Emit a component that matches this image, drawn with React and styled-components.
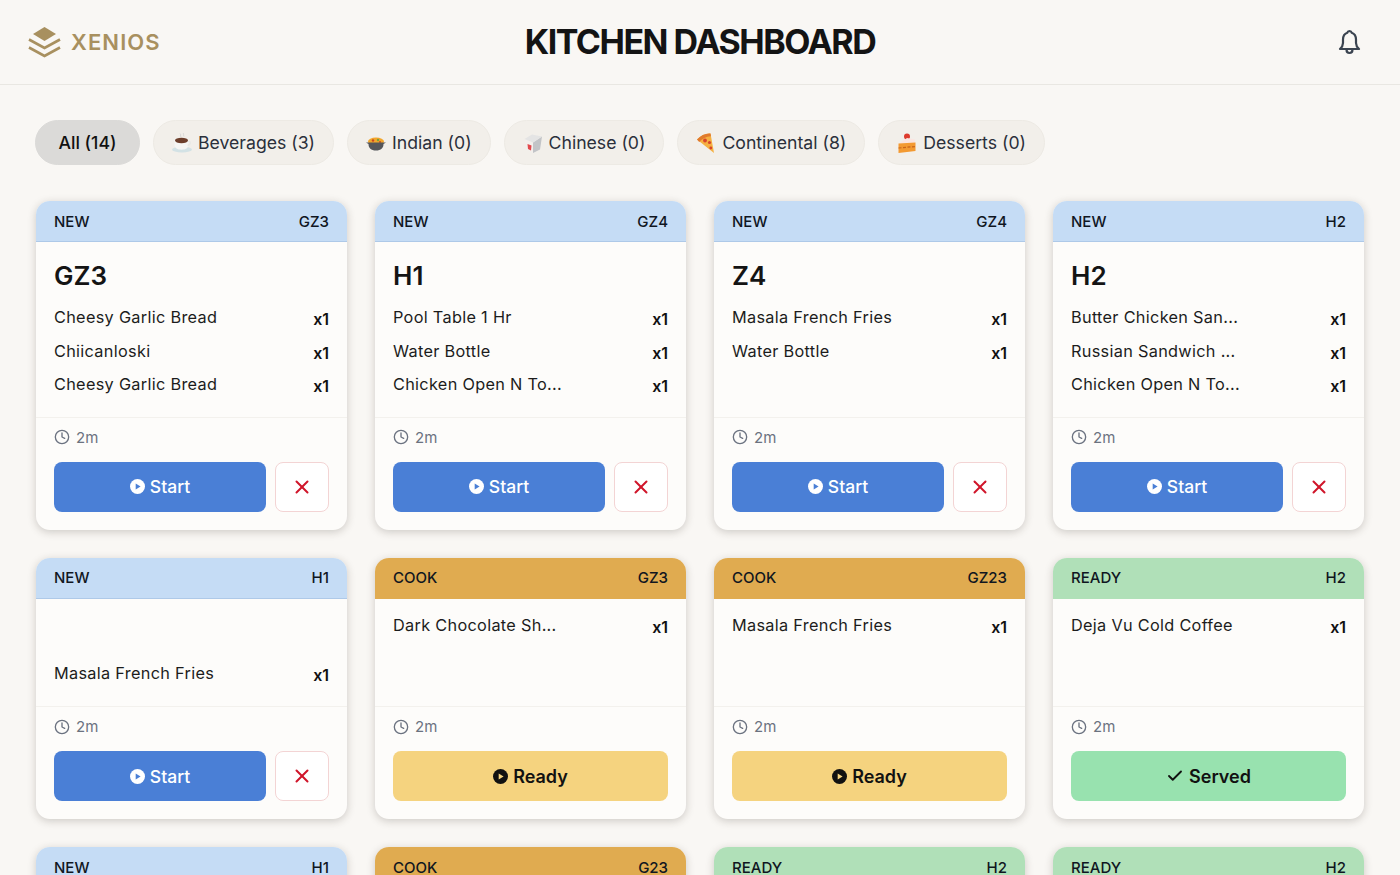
import React from "react";
import styled, { createGlobalStyle } from "styled-components";
import { Clock, X, Check } from "lucide-react";

const Global = createGlobalStyle`
  html, body { margin: 0; padding: 0; background: #f9f7f4; overflow: hidden; }
  * { box-sizing: border-box; }
  body { font-family: Inter, "Noto Sans", sans-serif; color: #111; }
`;

const Page = styled.div`
  height: 875px;
  overflow: hidden;
`;
const Header = styled.header`
  height: 85px;
  display: grid;
  grid-template-columns: 1fr auto 1fr;
  align-items: center;
  padding: 0 38px;
  border-bottom: 1px solid #e9e7e2;
`;
const Brand = styled.div`
  display: flex;
  align-items: center;
  gap: 10px;
  margin: -1px 0 0 -10px;
  color: #a8905f;
  font-size: 22px;
  font-weight: 600;
  letter-spacing: 1.1px;
`;
const Title = styled.h1`
  margin: -2px 0 0;
  font-size: 34px;
  font-weight: 700;
  letter-spacing: -1.5px;
  color: #141414;
`;
const BellWrap = styled.div`
  justify-self: end;
  display: flex;
  color: #3b4450;
`;
const Filters = styled.nav`
  display: flex;
  gap: 13px;
  padding: 35px 35px 0;
`;
const Chip = styled.button`
  height: 45px;
  display: flex;
  align-items: center;
  gap: 6px;
  padding: 0 ${p => (p.$active ? "22.5px" : "18px")};
  border-radius: 23px;
  border: 1px solid ${p => (p.$active ? "#dbdad8" : "#edeae4")};
  background: ${p => (p.$active ? "#dbdad8" : "#f2efea")};
  color: ${p => (p.$active ? "#111" : "#2b303b")};
  font: ${p => (p.$active ? 500 : 400)} 17.65px Inter, sans-serif;
`;
const Grid = styled.main`
  display: grid;
  grid-template-columns: repeat(4, 311px);
  gap: 28px;
  padding: 36px 36px 0;
`;
const Card = styled.article`
  display: flex;
  flex-direction: column;
  background: #fdfcfa;
  border-radius: 14px;
  overflow: hidden;
  box-shadow: 0 2px 8px rgba(50, 40, 30, 0.22);
`;
const tones = {
  NEW: { head: "#c5dcf5", line: "#aec9e8" },
  COOK: { head: "#e0ab50", line: "#e0ab50" },
  READY: { head: "#b0e0b8", line: "#b0e0b8" },
};
const CardHead = styled.div`
  height: 41px;
  flex: none;
  display: flex;
  justify-content: space-between;
  align-items: center;
  padding: 0 18px;
  font-size: 15px;
  font-weight: 500;
  color: #10161f;
  background: ${p => tones[p.$status].head};
  border-bottom: 1px solid ${p => tones[p.$status].line};
`;
const Body = styled.div`
  flex: 1;
  padding: 18px 18px 24px;
`;
const Heading = styled.h2`
  margin: 0 0 16px;
  height: 32px;
  line-height: 32.5px;
  font-size: 26px;
  font-weight: 600;
  color: #141414;
`;
const Items = styled.ul`
  list-style: none;
  margin: 0;
  padding: 0;
  display: flex;
  flex-direction: column;
  gap: 16px;
`;
const Item = styled.li`
  height: 17.5px;
  line-height: ${p => (p.$plain ? "17.5px" : "18.5px")};
  display: flex;
  justify-content: space-between;
  font-size: 16.3px;
  letter-spacing: 0.3px;
  color: #1c1c1c;
`;
const Qty = styled.span`
  position: relative;
  top: 2px;
  font-size: 16px;
  font-weight: 600;
  color: #111;
  letter-spacing: 0;
`;
const Footer = styled.div`
  border-top: 1px solid #f3f1ed;
  padding: 11px 18px 18px;
`;
const Time = styled.div`
  height: 17px;
  display: flex;
  align-items: center;
  gap: 6px;
  margin-bottom: 16px;
  font-size: 15px;
  color: #6b7280;
`;
const Actions = styled.div`
  display: flex;
  gap: 9px;
`;
const actionTones = {
  Start: { bg: "#4a7fd6", fg: "#fff", weight: 500, size: "17.5px" },
  Ready: { bg: "#f5d37f", fg: "#111", weight: 600, size: "18px" },
  Served: { bg: "#98e2af", fg: "#111", weight: 600, size: "18px" },
};
const Action = styled.button`
  flex: 1;
  height: 50px;
  border: 0;
  border-radius: 8px;
  display: flex;
  align-items: center;
  justify-content: center;
  gap: 5px;
  font: ${p => actionTones[p.$kind].weight} ${p => actionTones[p.$kind].size} Inter, sans-serif;
  background: ${p => actionTones[p.$kind].bg};
  color: ${p => actionTones[p.$kind].fg};
`;
const Cancel = styled.button`
  width: 54px;
  height: 50px;
  flex: none;
  border: 1px solid #f3d4d4;
  border-radius: 8px;
  background: #fff;
  color: #d0152a;
  display: flex;
  align-items: center;
  justify-content: center;
  padding: 0;
`;

const Logo = () => (
  <svg width="33" height="32" viewBox="0 0 33 32">
    <path d="M16.500 1 28 8 16.500 15 5 8Z" fill="#a8905f" />
    <path d="M1 13.500 16.500 22 32 13.500" fill="none" stroke="#a8905f" strokeWidth="2.600" />
    <path d="M1 21.500 16.500 30 32 21.500" fill="none" stroke="#a8905f" strokeWidth="2.600" />
  </svg>
);
const BellIcon = () => (
  <svg width="25" height="26" viewBox="0 0 25 26" fill="none" stroke="currentColor" strokeWidth="2.200" strokeLinejoin="round" strokeLinecap="round">
    <path d="M12.500 2a2.300 2.300 0 0 1 2.200 1.800c2.700 1 4.300 3.500 4.300 6.700v3.500c0 2 .9 4 3 6H3c2.100-2 3-4 3-6v-3.500c0-3.200 1.600-5.700 4.300-6.700A2.300 2.300 0 0 1 12.500 2Z" />
    <path d="M9.500 20.500c0 2 1.300 3.500 3 3.500s3-1.500 3-3.500" />
  </svg>
);
const Play = ({ cut }) => (
  <svg width="15" height="15" viewBox="0 0 15 15">
    <circle cx="7.500" cy="7.500" r="7.500" fill="currentColor" />
    <path d="M5.700 4.600 10.600 7.500 5.700 10.400Z" fill={cut} />
  </svg>
);
const Cup = () => (
  <svg width="20" height="20" viewBox="0 0 20 20">
    <ellipse cx="10" cy="16.500" rx="10" ry="3" fill="#d3e2e5" />
    <path d="M2.500 7h14v4.500c0 3.500-3 5.200-7 5.200s-7-1.700-7-5.200Z" fill="#f6f6f4" />
    <path d="M16 8.500c3-1 3.500 3-.5 4" fill="none" stroke="#e9e9e6" strokeWidth="1.300" />
    <ellipse cx="9.500" cy="7.500" rx="6.500" ry="2.700" fill="#6d3f2c" />
    <path d="M8 .5c1.200 1 0 2 1 3.500M11 0c1.200 1 0 2 1 3.500" stroke="#d8d8d6" fill="none" />
  </svg>
);
const Pot = () => (
  <svg width="20" height="20" viewBox="0 0 20 20">
    <ellipse cx="10" cy="8.500" rx="8" ry="4" fill="#f2a62c" />
    <circle cx="7" cy="7.500" r="1.200" fill="#c7471f" />
    <circle cx="12" cy="7" r="1.200" fill="#7aa03a" />
    <circle cx="14" cy="9" r="1" fill="#c7471f" />
    <path d="M0 9.500h20l-2.500 1.500c0 4-2.500 6.500-7.500 6.500S2.500 15 2.500 11Z" fill="#55565a" />
  </svg>
);
const Box = () => (
  <svg width="20" height="20" viewBox="0 0 20 20">
    <path d="M1.500 6 10 9.500V20l-6.500-3.500Z" fill="#f3efec" />
    <path d="M19 3.500 10 9.500V20l7-3.500Z" fill="#c2c4c7" />
    <path d="M1.500 6 9 1.500l10 2-9 6Z" fill="#e4e4e4" />
    <path d="M4.500 11 8.500 12.500 8 17.500 5 16Z" fill="#e2484c" />
  </svg>
);
const Pizza = () => (
  <svg width="20" height="20" viewBox="0 0 20 20">
    <path d="M1 6.500C5 2 10 0 14.500.5L18 20Z" fill="#f5b041" />
    <path d="M1 6.500C5 2 10 0 14.500.5L15 3.200C10.500 3 6.500 5.500 3.200 9Z" fill="#e17b2d" />
    <circle cx="9" cy="7.500" r="1.900" fill="#d8452b" />
    <circle cx="13.500" cy="9.500" r="1.600" fill="#d8452b" />
    <circle cx="14.800" cy="15" r="1.400" fill="#d8452b" />
  </svg>
);
const Cake = () => (
  <svg width="20" height="20" viewBox="0 0 20 20">
    <circle cx="10" cy="3.500" r="3" fill="#dd3b2e" />
    <path d="M2 10.500 10 5l8 1.500V10Z" fill="#fbe5e0" />
    <path d="M1.500 10.500 18.500 9.500V18L1.500 20Z" fill="#f39a32" />
    <path d="M1.500 15 18.500 13.500" stroke="#c9641a" strokeWidth="1.200" strokeDasharray="3 1.500" />
  </svg>
);

const filters = [
  { label: "All (14)", active: true },
  { label: "Beverages (3)", icon: <Cup /> },
  { label: "Indian (0)", icon: <Pot /> },
  { label: "Chinese (0)", icon: <Box /> },
  { label: "Continental (8)", icon: <Pizza /> },
  { label: "Desserts (0)", icon: <Cake /> },
];

const orders = [
  { s: "NEW", t: "GZ3", name: "GZ3", items: ["Cheesy Garlic Bread", "Chiicanloski", "Cheesy Garlic Bread"] },
  { s: "NEW", t: "GZ4", name: "H1", items: ["Pool Table 1 Hr", "Water Bottle", "Chicken Open N To..."] },
  { s: "NEW", t: "GZ4", name: "Z4", items: ["Masala French Fries", "Water Bottle"] },
  { s: "NEW", t: "H2", name: "H2", items: ["Butter Chicken San...", "Russian Sandwich ...", "Chicken Open N To..."] },
  { s: "NEW", t: "H1", blank: true, items: ["Masala French Fries"] },
  { s: "COOK", t: "GZ3", items: ["Dark Chocolate Sh..."] },
  { s: "COOK", t: "GZ23", items: ["Masala French Fries"] },
  { s: "READY", t: "H2", items: ["Deja Vu Cold Coffee"] },
  { s: "NEW", t: "H1", blank: true, items: ["Masala French Fries"] },
  { s: "COOK", t: "G23", items: ["Masala French Fries"] },
  { s: "READY", t: "H2", items: ["Deja Vu Cold Coffee"] },
  { s: "READY", t: "H2", items: ["Deja Vu Cold Coffee"] },
];

const OrderAction = ({ status }) => {
  if (status === "NEW")
    return (
      <Actions>
        <Action $kind="Start"><Play cut="#4a7fd6" />Start</Action>
        <Cancel><X size={22} strokeWidth={2.200} /></Cancel>
      </Actions>
    );
  if (status === "COOK")
    return <Actions><Action $kind="Ready"><Play cut="#f5d37f" />Ready</Action></Actions>;
  return <Actions><Action $kind="Served"><Check size={18} strokeWidth={2.500} />Served</Action></Actions>;
};

export default function App() {
  return (
    <Page>
      <Global />
      <Header>
        <Brand><Logo />XENIOS</Brand>
        <Title>KITCHEN DASHBOARD</Title>
        <BellWrap><BellIcon /></BellWrap>
      </Header>
      <Filters>
        {filters.map(f => (
          <Chip key={f.label} $active={f.active}>{f.icon}{f.label}</Chip>
        ))}
      </Filters>
      <Grid>
        {orders.map((o, i) => (
          <Card key={i}>
            <CardHead $status={o.s}><span>{o.s}</span><span>{o.t}</span></CardHead>
            <Body>
              {(o.name || o.blank) && <Heading>{o.name}</Heading>}
              <Items>
                {o.items.map((it, j) => (
                  <Item key={j} $plain={!o.name}><span>{it}</span><Qty>x1</Qty></Item>
                ))}
              </Items>
            </Body>
            <Footer>
              <Time><Clock size={16} strokeWidth={2} />2m</Time>
              <OrderAction status={o.s} />
            </Footer>
          </Card>
        ))}
      </Grid>
    </Page>
  );
}
